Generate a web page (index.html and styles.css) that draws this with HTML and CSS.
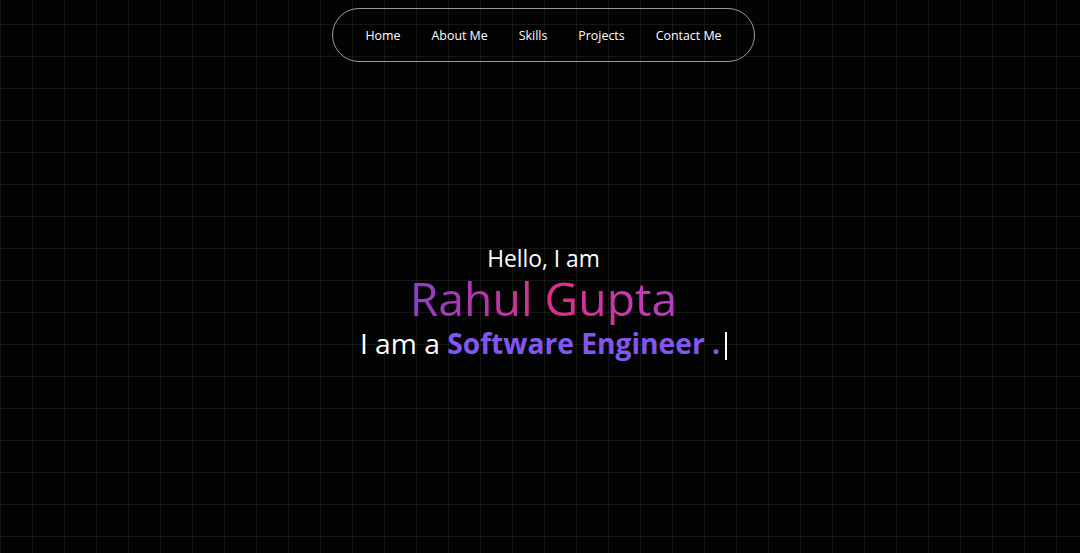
FILE: index.html
```html
<!DOCTYPE html>
<html lang="en">
<head>
    <meta charset="utf-8">
    <meta name="viewport" content="width=device-width, initial-scale=1.0">
    <title>Rahul Gupta | Portfolio</title>
    <link rel="stylesheet" href="styles.css">
</head>
<body>
    <header class="top">
        <nav class="navbar">
            <a href="#home">Home</a>
            <a href="#about">About Me</a>
            <a href="#skills">Skills</a>
            <a href="#projects">Projects</a>
            <a href="#contact">Contact Me</a>
        </nav>
    </header>

    <section class="hero" id="home">
        <p class="hello">Hello, I am</p>
        <h1 class="name">Rahul Gupta</h1>
        <p class="role">I am a <span class="typed">Software Engineer .</span><span class="cursor"></span></p>
    </section>
</body>
</html>
```

FILE: styles.css
```css
body {
    margin: 0;
    padding-left: 7px;
    min-height: 100vh;
    box-sizing: border-box;
    background-color: #030303;
    background-image:
        linear-gradient(to right, rgba(255, 255, 255, 0.075) 1px, transparent 1px),
        linear-gradient(to bottom, rgba(255, 255, 255, 0.075) 1px, transparent 1px);
    background-size: 32px 32px;
    background-position: 0 24px;
    color: #fff;
    font-family: "Open Sans", "Noto Sans", sans-serif;
}
.top {
    display: flex;
    justify-content: center;
    padding-top: 8px;
}
.navbar {
    display: flex;
    align-items: center;
    gap: 31px;
    height: 52px;
    padding: 0 32px;
    border: 1px solid #9a9a9a;
    border-radius: 30px;
}
.navbar a {
    color: #fff;
    text-decoration: none;
    font-size: 12.4px;
}
.hero {
    display: flex;
    flex-direction: column;
    align-items: center;
    margin-top: 183px;
    text-align: center;
}
.hello {
    margin: 0;
    font-size: 22.8px;
    line-height: 28px;
}
.name {
    margin: 0;
    font-size: 46.3px;
    font-weight: 400;
    line-height: 52px;
    background: linear-gradient(90deg, #8a3fcc 0%, #de2f88 55%, #b43ec6 100%);
    -webkit-background-clip: text;
    background-clip: text;
    color: transparent;
}
.role {
    margin: 0;
    font-size: 28.2px;
    line-height: 36px;
}
.typed {
    color: #8257f0;
    font-weight: 700;
}
.cursor {
    display: inline-block;
    width: 2px;
    height: 28px;
    margin-left: 5px;
    vertical-align: -6px;
    background-color: #fff;
}
```
